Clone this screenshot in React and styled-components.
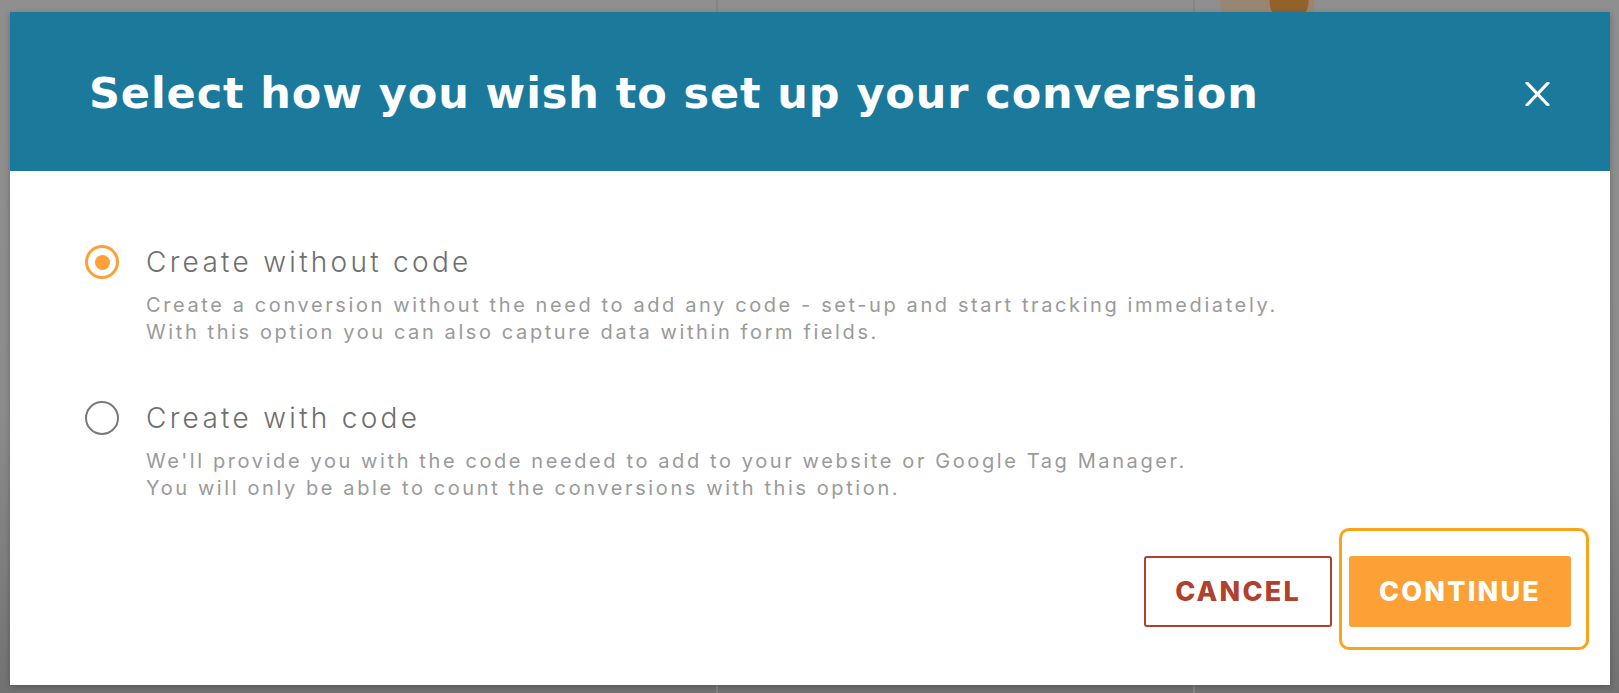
import React, { useState } from 'react';
import styled, { createGlobalStyle } from 'styled-components';

const GlobalStyle = createGlobalStyle`
  html, body {
    margin: 0;
    padding: 0;
    background: #8c8c8c;
  }
  * {
    box-sizing: border-box;
  }
`;

const Backdrop = styled.div`
  /* dimmed page behind the dialog, with faint traces of the page under it */
  width: 100%;
  height: 693px;
  padding: 12px 9px 8px 10px;
  display: flex;
  background:
    radial-gradient(circle at 1289px 2px, #93622b 0 19px, transparent 20px),
    radial-gradient(circle at 1267px 0px, #998672 0 46px, transparent 48px),
    linear-gradient(to right, transparent 716px, #858585 716px, #858585 718px, transparent 718px),
    linear-gradient(to right, transparent 1193px, #868686 1193px, #868686 1195px, transparent 1195px),
    linear-gradient(to bottom, #8f8f8f 0, #8c8c8c 60%, #727272 100%);
`;

const Modal = styled.div`
  flex: 1;
  display: flex;
  flex-direction: column;
  background: #fff;
  box-shadow: 0 2px 6px rgba(0, 0, 0, 0.25);
`;

const Header = styled.div`
  height: 159px;
  flex-shrink: 0;
  display: flex;
  align-items: center;
  justify-content: space-between;
  padding: 4px 58px 0 79px;
  background: #1b7a9c;
`;

const Title = styled.h1`
  margin: 0;
  color: #fff;
  font-family: 'DejaVu Sans', Inter, sans-serif;
  font-weight: 700;
  font-size: 43px;
  letter-spacing: 0.9px;
  line-height: 1;
`;

const CloseButton = styled.button`
  width: 30px;
  height: 30px;
  padding: 0;
  border: none;
  background: transparent;
  cursor: pointer;
  display: flex;
  align-items: center;
  justify-content: center;
`;

const Body = styled.div`
  flex: 1;
  display: flex;
  flex-direction: column;
  padding: 74px 39px 58px 75px;
`;

const Option = styled.div`
  display: flex;
  flex-direction: column;
  margin-bottom: ${(p) => p.$gap || 0}px;
`;

const OptionRow = styled.label`
  display: flex;
  align-items: center;
  gap: 27px;
  height: 34px;
  cursor: pointer;
`;

const Radio = styled.span`
  width: 34px;
  height: 34px;
  border-radius: 50%;
  flex-shrink: 0;
  border: ${(p) => (p.$checked ? '3px solid #fda035' : '2.5px solid #7a7a7a')};
  display: flex;
  align-items: center;
  justify-content: center;
  &::after {
    content: '';
    width: 15px;
    height: 15px;
    border-radius: 50%;
    background: ${(p) => (p.$checked ? '#fda035' : 'transparent')};
  }
`;

const OptionLabel = styled.span`
  font-family: Inter, 'Open Sans', sans-serif;
  font-weight: 300;
  font-size: 28px;
  letter-spacing: 3.3px;
  color: #6f6f6f;
`;

const Desc = styled.p`
  margin: 13px 0 0 61px;
  font-family: Inter, 'Open Sans', sans-serif;
  font-weight: 400;
  font-size: 20px;
  letter-spacing: 2.6px;
  line-height: 27px;
  color: #9a9a9a;
`;

const Footer = styled.div`
  margin-top: auto;
  display: flex;
  justify-content: flex-end;
  gap: 17px;
`;

const Button = styled.button`
  position: relative;
  height: 71px;
  border-radius: 3px;
  font-family: Inter, 'Open Sans', sans-serif;
  font-weight: 800;
  font-size: 27px;
  letter-spacing: 2.2px;
  cursor: pointer;
  width: ${(p) => p.$width}px;
  color: ${(p) => (p.$primary ? '#fff' : '#b0412e')};
  background: ${(p) => (p.$primary ? '#fda035' : '#fff')};
  border: ${(p) => (p.$primary ? 'none' : '2px solid #b0412e')};
`;

const Highlight = styled.span`
  /* tour highlight drawn over the continue button */
  position: absolute;
  left: -10px;
  top: -28px;
  right: -18px;
  bottom: -23px;
  border: 3px solid #fba417;
  border-radius: 10px;
  pointer-events: none;
`;

const options = [
  {
    id: 'nocode',
    label: 'Create without code',
    lines: [
      'Create a conversion without the need to add any code - set-up and start tracking immediately.',
      'With this option you can also capture data within form fields.',
    ],
  },
  {
    id: 'code',
    label: 'Create with code',
    lines: [
      "We'll provide you with the code needed to add to your website or Google Tag Manager.",
      'You will only be able to count the conversions with this option.',
    ],
  },
];

const App = () => {
  const [selected, setSelected] = useState('nocode');

  return (
    <>
      <GlobalStyle />
      <Backdrop>
        <Modal>
          <Header>
            <Title>Select how you wish to set up your conversion</Title>
            <CloseButton aria-label="Close">
              <svg width="25" height="24" viewBox="0 0 25 24">
                <path d="M2 1 L23 23 M23 1 L2 23" stroke="#fff" strokeWidth="3.2" strokeLinecap="round" />
              </svg>
            </CloseButton>
          </Header>
          <Body>
            {options.map((o, i) => (
              <Option key={o.id} $gap={i === 0 ? 55 : 0}>
                <OptionRow onClick={() => setSelected(o.id)}>
                  <Radio $checked={selected === o.id} />
                  <OptionLabel>{o.label}</OptionLabel>
                </OptionRow>
                <Desc>
                  {o.lines[0]}
                  <br />
                  {o.lines[1]}
                </Desc>
              </Option>
            ))}
            <Footer>
              <Button $width={188}>CANCEL</Button>
              <Button $primary $width={222}>
                CONTINUE
                <Highlight />
              </Button>
            </Footer>
          </Body>
        </Modal>
      </Backdrop>
    </>
  );
};

export default App;
